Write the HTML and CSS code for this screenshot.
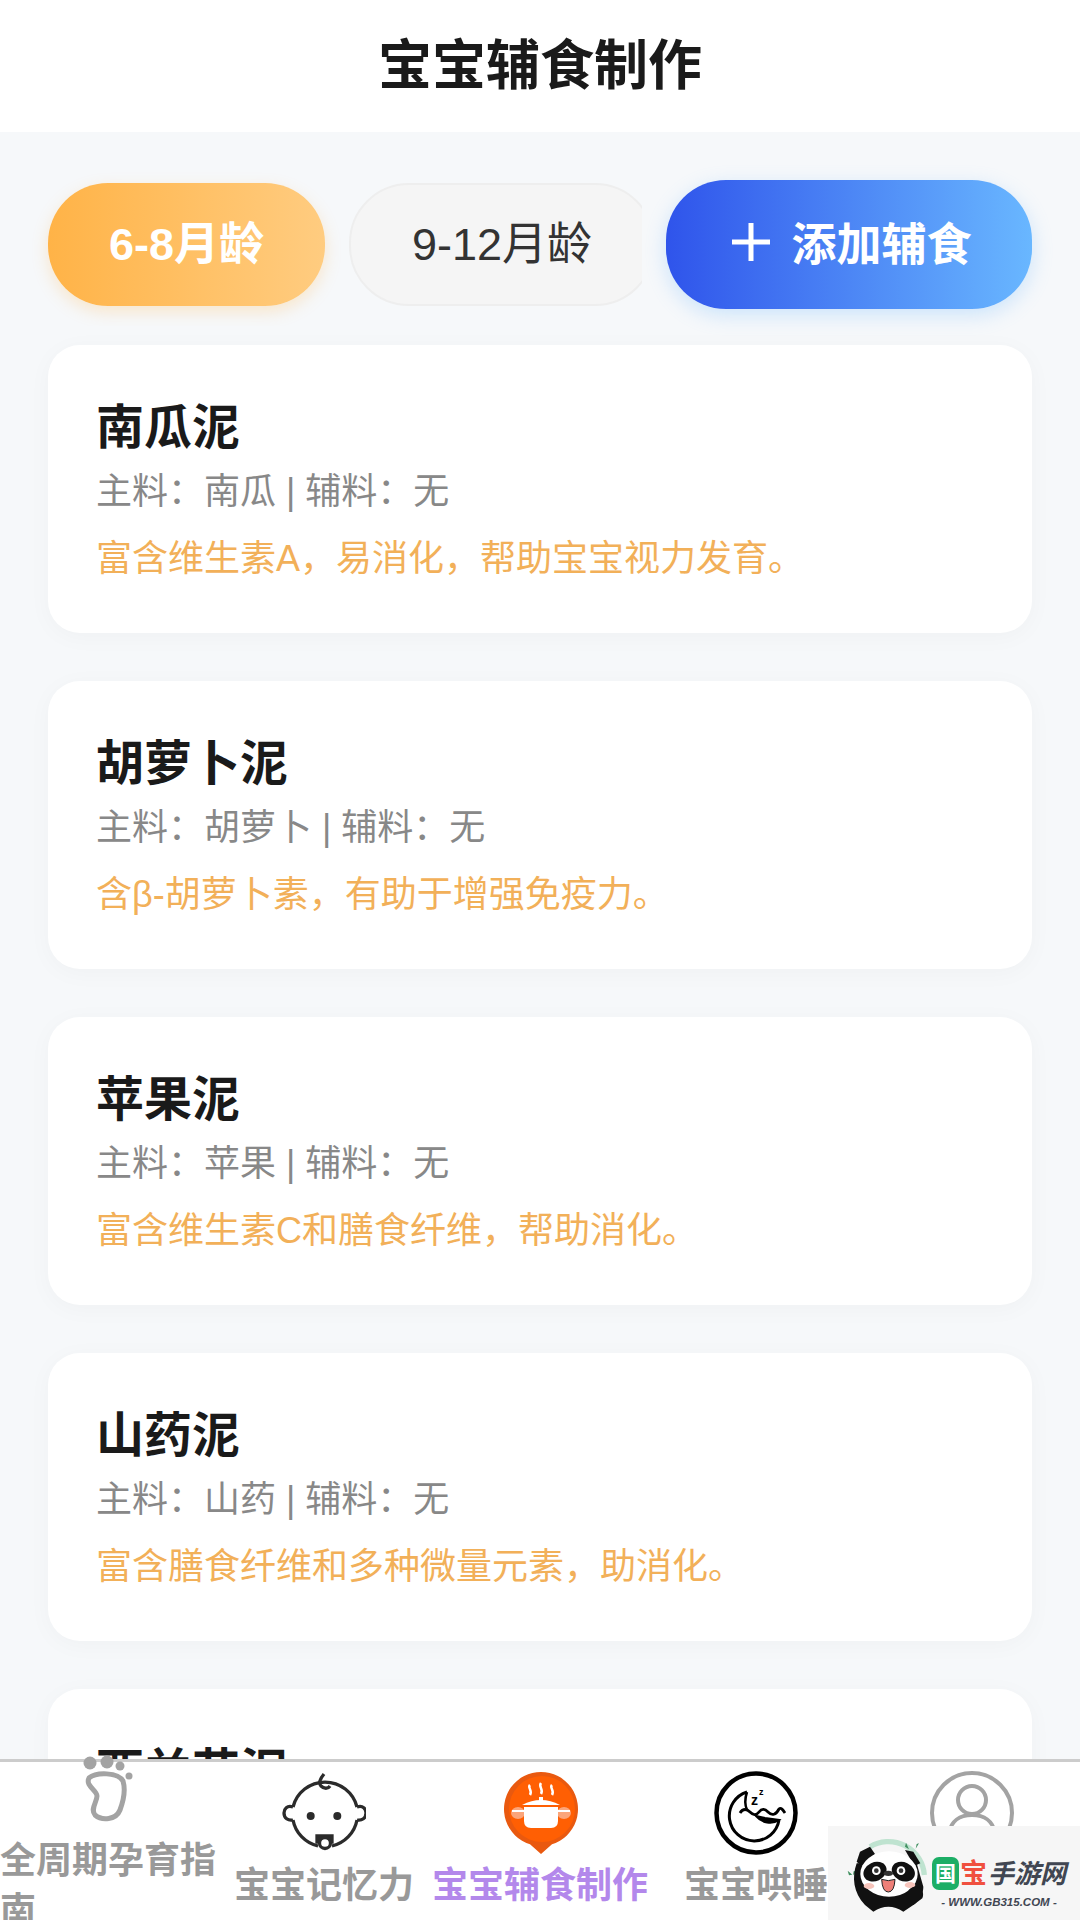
FILE: index.html
```html
<!DOCTYPE html>
<html lang="zh-CN">
<head>
    <meta charset="UTF-8">
    <meta name="viewport" content="width=device-width, initial-scale=1.0">
    <title>宝宝辅食制作</title>
    <link rel="stylesheet" href="styles.css">
</head>
<body>
    <div class="app">
        <header class="page-header">
            <h1>宝宝辅食制作</h1>
        </header>

        <main class="content">
            <!-- Age tabs and add button -->
            <div class="toolbar">
                <div class="tabs">
                    <button type="button" class="tab tab-active">6-8月龄</button>
                    <button type="button" class="tab">9-12月龄</button>
                </div>
                <button type="button" class="add-button">
                    <svg class="add-icon" viewBox="0 0 40 40"><path d="M20 1V39M1 20H39" stroke="#fff" stroke-width="5" fill="none"/></svg>
                    <span>添加辅食</span>
                </button>
            </div>

            <!-- Food list -->
            <section class="card">
                <h2>南瓜泥</h2>
                <p class="card-sub">主料：南瓜 | 辅料：无</p>
                <p class="card-desc">富含维生素A，易消化，帮助宝宝视力发育。</p>
            </section>
            <section class="card">
                <h2>胡萝卜泥</h2>
                <p class="card-sub">主料：胡萝卜 | 辅料：无</p>
                <p class="card-desc">含β-胡萝卜素，有助于增强免疫力。</p>
            </section>
            <section class="card">
                <h2>苹果泥</h2>
                <p class="card-sub">主料：苹果 | 辅料：无</p>
                <p class="card-desc">富含维生素C和膳食纤维，帮助消化。</p>
            </section>
            <section class="card">
                <h2>山药泥</h2>
                <p class="card-sub">主料：山药 | 辅料：无</p>
                <p class="card-desc">富含膳食纤维和多种微量元素，助消化。</p>
            </section>
            <section class="card">
                <h2>西兰花泥</h2>
            </section>
        </main>

        <!-- Bottom navigation -->
        <nav class="bottom-nav">
            <a class="nav-item" href="#">
                <svg class="nav-icon" viewBox="0 0 84 84">
                    <circle cx="24" cy="17" r="6.5" fill="#a3a3a3"/>
                    <circle cx="41" cy="16" r="6.5" fill="#a3a3a3"/>
                    <circle cx="54" cy="20" r="4.5" fill="#a3a3a3"/>
                    <circle cx="63" cy="30" r="3.5" fill="#a3a3a3"/>
                    <path d="M23 32C30 26 52 26 57 35C60 45 57 56 54 64C50 74 36 75 29 69C24 63 31 56 31 50C31 44 19 40 23 32Z" fill="none" stroke="#a3a3a3" stroke-width="5"/>
                </svg>
                <span class="nav-label">全周期孕育指南</span>
            </a>
            <a class="nav-item" href="#">
                <svg class="nav-icon" viewBox="0 0 84 84" fill="none" stroke="#2b2b2b" stroke-width="3.3">
                    <path d="M11 36A33 33 0 0 1 75 36M75 49A33 33 0 0 1 50 75M36 75A33 33 0 0 1 11 49"/>
                    <path d="M11 36C5 34 2 38 2 42C2 47 6 50 11 49M75 36C81 34 84 38 84 42C84 47 80 50 75 49"/>
                    <path d="M42 3C38 8 36 12 39 15C42 18 46 18 48 15"/>
                    <circle cx="28.7" cy="45" r="4" fill="#2b2b2b" stroke="none"/>
                    <circle cx="55.3" cy="45" r="4" fill="#2b2b2b" stroke="none"/>
                    <path d="M35 65H50V71H35Z" fill="#2b2b2b"/>
                    <circle cx="43" cy="72" r="5.5" fill="#fff"/>
                </svg>
                <span class="nav-label">宝宝记忆力</span>
            </a>
            <a class="nav-item nav-item-active" href="#">
                <svg class="nav-icon" viewBox="0 0 84 84">
                    <path d="M43 83L32 73.3A37 37 0 1 1 54 73.3Z" fill="#e9590f"/>
                    <circle cx="44" cy="38" r="33" fill="#ff5f03"/>
                    <ellipse cx="20" cy="42" rx="7" ry="6" fill="#fba57a"/>
                    <ellipse cx="66" cy="42" rx="7" ry="6" fill="#fba57a"/>
                    <path d="M14 40H26M60 40H72" stroke="#fff" stroke-width="2"/>
                    <path d="M26 36H60V50Q60 57 53 57H33Q26 57 26 50Z" fill="#fff"/>
                    <path d="M24 34Q43 24 62 34Z" fill="#fff"/>
                    <rect x="41" y="26" width="4" height="5" fill="#fff"/>
                    <path d="M32 14C29 17 35 19 32 24M43 12C40 16 46 18 43 23M54 14C51 17 57 19 54 24" fill="none" stroke="#fff" stroke-width="2.5"/>
                </svg>
                <span class="nav-label">宝宝辅食制作</span>
            </a>
            <a class="nav-item" href="#">
                <svg class="nav-icon" viewBox="0 0 84 84" fill="none" stroke="#000">
                    <circle cx="42" cy="42" r="39.5" stroke-width="4.5"/>
                    <path d="M33 21A25 25 0 1 0 65 49" stroke-width="3"/>
                    <path d="M33 21C31 27 30 32 33 39" stroke-width="2.5"/>
                    <path d="M65 49C58 54 48 52 42 45L51 47Z" fill="#000" stroke-width="2"/>
                    <path d="M26 42C29 37 33 38 36 41C39 44 42 45 45 41C48 37 51 38 54 41C58 45 62 44 65 38C67 36 69 39 71 42" stroke-width="2.8"/>
                    <text x="37" y="34" class="moon-z">z</text>
                    <text x="45" y="24" class="moon-z-small">z</text>
                </svg>
                <span class="nav-label">宝宝哄睡</span>
            </a>
            <a class="nav-item" href="#">
                <svg class="nav-icon" viewBox="0 0 84 84" fill="none" stroke="#a3a3a3" stroke-width="4">
                    <circle cx="42" cy="42" r="40"/>
                    <circle cx="42" cy="29" r="14"/>
                    <path d="M19 62C21 50 30 44 42 44C54 44 63 50 65 62"/>
                </svg>
                <span class="nav-label">我的</span>
            </a>
        </nav>

        <!-- Site watermark over the corner -->
        <div class="watermark">
            <svg class="panda" viewBox="0 0 270 270">
                <path d="M75 50A108 108 0 0 1 238 135" fill="none" stroke="#bfe3d0" stroke-width="16"/>
                <path d="M183 38L192 58L180 50ZM215 42L222 40L212 56ZM8 122L22 134L12 136ZM36 122L24 136L26 124Z" fill="#3f8f5f"/>
                <path d="M35 100C20 140 25 190 60 225L85 245Q130 215 175 245L205 225C225 210 235 190 235 170L215 100Z" fill="#111"/>
                <path d="M35 95L45 65L75 50L90 72L50 108Z" fill="#111"/>
                <path d="M180 60L205 65L226 100L208 108Z" fill="#111"/>
                <ellipse cx="132" cy="132" rx="86" ry="68" fill="#fff"/>
                <ellipse cx="90" cy="125" rx="36" ry="28" transform="rotate(-25 90 125)" fill="#111"/>
                <ellipse cx="175" cy="125" rx="36" ry="28" transform="rotate(25 175 125)" fill="#111"/>
                <circle cx="94" cy="122" r="13" fill="#fff"/>
                <circle cx="168" cy="122" r="13" fill="#fff"/>
                <circle cx="94" cy="122" r="7" fill="#333"/>
                <circle cx="168" cy="122" r="7" fill="#333"/>
                <ellipse cx="130" cy="130" rx="14" ry="8" fill="#333"/>
                <path d="M110 148Q130 156 150 148Q148 186 130 186Q112 186 110 148Z" fill="#ee7f78" stroke="#222" stroke-width="3"/>
                <ellipse cx="72" cy="168" rx="16" ry="9" fill="#f7c4bb"/>
                <ellipse cx="195" cy="165" rx="16" ry="9" fill="#f7c4bb"/>
                <path d="M185 195C190 175 200 170 215 170C232 172 238 190 232 205L205 225Z" fill="#111"/>
            </svg>
            <div class="site">
                <div class="site-name">
                    <span class="site-guo">国</span>
                    <span class="site-bao">宝</span>
                    <span class="site-rest">手游网</span>
                </div>
                <div class="site-url">- WWW.GB315.COM -</div>
            </div>
        </div>
    </div>
</body>
</html>
```

FILE: styles.css
```css
* {
    box-sizing: border-box;
}

body {
    margin: 0;
    font-family: "Liberation Sans", "Noto Sans CJK SC", sans-serif;
    background-color: #f6f8fa;
    color: #1a1a1a;
}

.app {
    position: relative;
    display: flex;
    flex-direction: column;
    height: 1920px;
    overflow: hidden;
}

.page-header {
    flex: none;
    height: 132px;
    background-color: #fff;
    display: flex;
    align-items: center;
    justify-content: center;
}

.page-header h1 {
    margin: 0;
    font-size: 54px;
    line-height: 1.2;
}

.content {
    flex: 1;
    min-height: 0;
    overflow: hidden;
    padding: 48px 48px 0;
}

.toolbar {
    display: flex;
    align-items: center;
    gap: 24px;
    margin-bottom: 36px;
}

.tabs {
    flex: 1;
    min-width: 0;
    display: flex;
    gap: 24px;
    overflow: hidden;
    margin: -20px 0 -20px -20px;
    padding: 20px 0 20px 20px;
}

.tab {
    flex: none;
    height: 123px;
    padding: 0 61px 8px;
    border: 2px solid #eee;
    border-radius: 60px;
    background-color: #f5f5f5;
    color: #333;
    font-family: inherit;
    font-size: 45px;
}

.tab-active {
    border: none;
    background: linear-gradient(90deg, #ffb347, #ffcc80);
    color: #fff;
    font-weight: bold;
    box-shadow: 0 6px 16px rgba(255, 179, 71, 0.25);
}

.add-button {
    flex: none;
    width: 366px;
    height: 129px;
    display: flex;
    align-items: center;
    justify-content: center;
    gap: 20px;
    padding: 0 0 6px 5px;
    border: none;
    border-radius: 60px;
    background: linear-gradient(90deg, #2f54eb, #69b7ff);
    color: #fff;
    font-family: inherit;
    font-size: 45px;
    font-weight: bold;
    box-shadow: 0 6px 20px rgba(105, 183, 255, 0.3);
}

.add-icon {
    width: 40px;
    height: 40px;
}

.card {
    height: 288px;
    margin-bottom: 48px;
    padding: 51px 48px 0;
    background-color: #fff;
    border-radius: 32px;
    box-shadow: 0 4px 24px rgba(0, 0, 0, 0.03);
}

.card h2 {
    margin: 0 0 2px;
    font-size: 48px;
    line-height: 64px;
}

.card-sub {
    margin: 0;
    font-size: 36px;
    line-height: 60px;
    color: #888;
}

.card-desc {
    margin: 7px 0 0;
    font-size: 36px;
    line-height: 60px;
    color: #f2b059;
}

.bottom-nav {
    position: relative;
    flex: none;
    height: 161px;
    display: flex;
    align-items: center;
    background-color: #fff;
    border-top: 3px solid #ccc;
}

.nav-item {
    flex: 1 0 0;
    min-width: 0;
    display: flex;
    flex-direction: column;
    align-items: center;
    text-decoration: none;
    color: #999;
}

.nav-item-active {
    color: #b388eb;
}

.nav-icon {
    display: block;
    width: 84px;
    height: 84px;
}

.nav-label {
    width: 100%;
    margin-top: 6px;
    font-size: 36px;
    font-weight: bold;
    line-height: 50px;
    text-align: center;
}

.nav-item:first-child .nav-label {
    text-align: left;
}

.moon-z {
    font-family: "Liberation Sans", sans-serif;
    font-size: 14px;
    font-weight: bold;
    fill: #000;
    stroke: none;
}

.moon-z-small {
    font-family: "Liberation Sans", sans-serif;
    font-size: 9px;
    font-weight: bold;
    fill: #000;
    stroke: none;
}

.watermark {
    position: absolute;
    right: 0;
    bottom: 0;
    width: 252px;
    height: 94px;
    display: flex;
    align-items: flex-start;
    padding: 4px 0 0 17px;
    background-color: #f6f6f6;
}

.panda {
    flex: none;
    width: 90px;
    height: 90px;
}

.site {
    display: flex;
    flex-direction: column;
    align-items: center;
    margin: 27px 0 0 -3px;
}

.site-name {
    display: flex;
    align-items: center;
    gap: 1px;
    line-height: 32px;
}

.site-guo {
    width: 27px;
    height: 33px;
    border-radius: 7px;
    background-color: #1cae66;
    color: #fff;
    font-size: 21px;
    font-weight: bold;
    line-height: 33px;
    text-align: center;
}

.site-bao {
    color: #f0503f;
    font-size: 27px;
    font-weight: bold;
}

.site-rest {
    color: #414652;
    font-size: 26px;
    font-weight: bold;
    font-style: italic;
}

.site-url {
    margin-top: 5px;
    color: #414652;
    font-size: 11.5px;
    font-weight: bold;
    font-style: italic;
    line-height: 14px;
    white-space: nowrap;
}
```
